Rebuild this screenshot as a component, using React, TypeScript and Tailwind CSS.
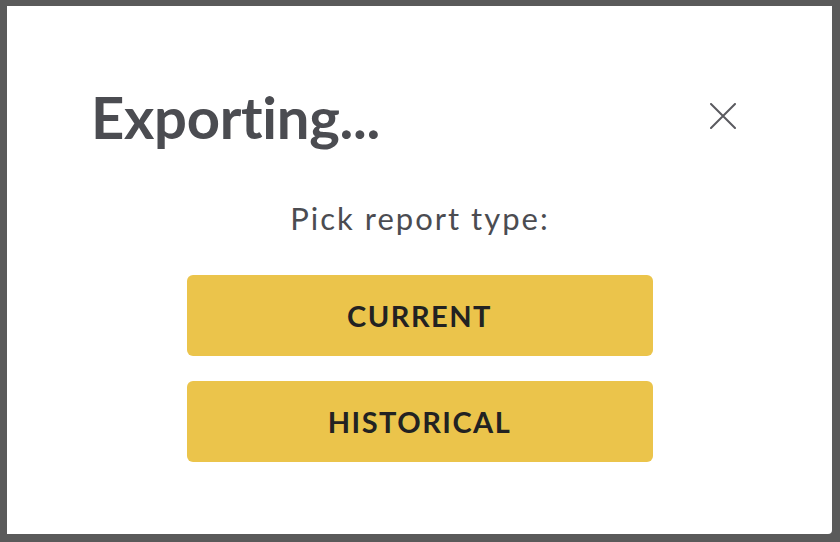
export default function App() {
  return (
    <div className="w-[840px] h-[542px] bg-[#5a5a5a] pt-[6px] pl-[7px] pb-[8px] pr-[8px] font-['Lato','Liberation_Sans',sans-serif] [font-variant-ligatures:none]">
      <div className="h-full bg-white rounded-br-[4px] flex flex-col">
        <div className="flex justify-between items-start pt-[82px] pl-[84px] pr-[96px]">
          <h1 className="text-[58px] leading-none font-bold tracking-[-0.3px] text-[#4b4c51]">Exporting...</h1>
          <button className="mt-[15px] w-[26px] h-[26px] flex items-center justify-center" aria-label="Close">
            <svg width="26" height="26" viewBox="0 0 26 26" fill="none" stroke="#5a5a5f" strokeWidth="2" strokeLinecap="round">
              <path d="M1 1L25 25M25 1L1 25" />
            </svg>
          </button>
        </div>
        <div className="flex flex-col items-center mt-[57px]">
          <p className="text-[31px] leading-none tracking-[2px] pl-[1px] text-[#4b4c51]">Pick report type:</p>
          <div className="mt-[41px] flex flex-col gap-[25px]">
            {['CURRENT', 'HISTORICAL'].map((label) => (
              <button
                key={label}
                className="w-[466px] h-[81px] rounded-[6px] bg-[#ebc44b] text-[29px] leading-none font-bold tracking-[1.5px] text-[#222222]"
              >
                {label}
              </button>
            ))}
          </div>
        </div>
      </div>
    </div>
  );
}
